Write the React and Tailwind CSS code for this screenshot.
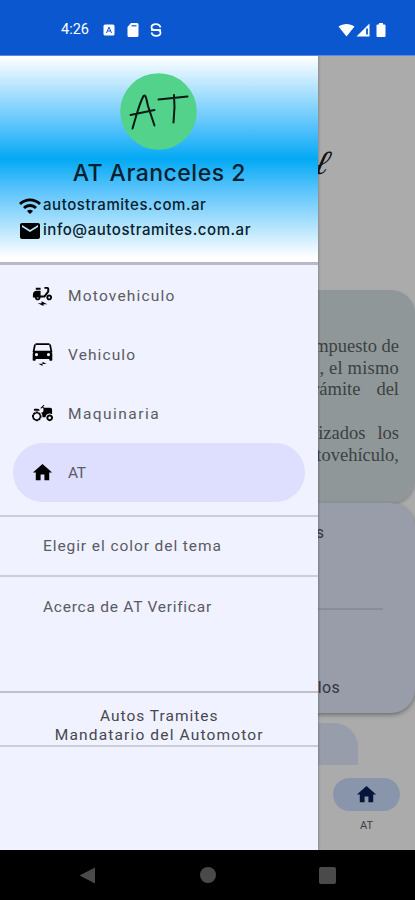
import clsx from "clsx";
import {
  MdAgriculture,
  MdElectricMoped,
  MdEmail,
  MdHome,
  MdWifi,
} from "react-icons/md";

// Front view of a car with the charging bolt underneath
const CarIcon = ({ size }) => (
  <svg width={size} height={size} viewBox="0 0 23 23">
    <path d="M4.500 1.200h14M4 1.500 2.600 8.500h17.800L19 1.500" fill="none" stroke="#000" strokeWidth="1.700" />
    <path
      fillRule="evenodd"
      d="M3 8h17l1.300 2.500V17a.8.8 0 0 1-.8.8h-1.400a.8.8 0 0 1-.8-.8v-1H4.700v1a.8.8 0 0 1-.8.8H2.500a.8.8 0 0 1-.8-.8v-6.500zM5.500 10a1.600 1.600 0 1 0 0 3.200 1.600 1.600 0 0 0 0-3.200zm12 0a1.600 1.600 0 1 0 0 3.200 1.600 1.600 0 0 0 0-3.200z"
    />
    <path d="M7.500 20.800h4v-2l4 2.200h-4v2z" />
  </svg>
);

const menuItems = [
  { label: "Motovehiculo", icon: MdElectricMoped, spacing: "tracking-[1.2px]" },
  { label: "Vehiculo", icon: CarIcon, spacing: "tracking-[1.1px]" },
  { label: "Maquinaria", icon: MdAgriculture, spacing: "tracking-[1.45px]" },
  { label: "AT", icon: MdHome, spacing: "tracking-[-0.5px]", active: true },
];

const StatusBar = () => (
  <header className="flex h-14 shrink-0 items-center border-b border-[#5c88df] bg-[#0b57d0] pt-[5px] pr-7 pl-[61px] text-white">
    <span className="w-[29px] font-[Roboto] text-[14.500px]">4:26</span>
    <svg className="ml-[13px]" width="12" height="12" viewBox="0 0 12 12">
      <rect x="0.5" y="0.5" width="11" height="11" rx="1.5" fill="#fff" />
      <path d="M3.5 9 6 3l2.5 6M4.5 7h3" stroke="#0b57d0" fill="none" />
    </svg>
    <svg className="ml-3" width="12" height="14" viewBox="0 0 12 14">
      <path d="M4 0h6a1.5 1.5 0 0 1 1.500 1.500v11A1.500 1.500 0 0 1 10 14H2A1.500 1.500 0 0 1 .5 12.500V4z" fill="#fff" />
      <path d="M4.500 2.800h5" stroke="#0b57d0" strokeWidth="1.200" />
    </svg>
    <svg className="ml-[11px]" width="12" height="14" viewBox="0 0 12 14" fill="none" stroke="#fff" strokeWidth="1.700">
      <path d="M10.500 4.500C10 2.500 8.500 1.200 6 1.200S1.500 2.500 1.500 4.500 3 7 6 7s4.500.8 4.500 2.700-2 3.100-4.500 3.100-4-1.300-4.500-3.300" />
      <path d="M1 7h10" />
    </svg>
    <div className="ml-auto flex items-center gap-[1px]">
      <svg width="17" height="14" viewBox="0 0 17 14" fill="#fff">
        <path d="M.5 3.500C5 0 12 0 16.500 3.500L8.500 13.500z" />
      </svg>
      <svg width="14" height="14" viewBox="0 0 14 14">
        <path d="M13.500.5v13H.5z" fill="#fff" />
        <path d="M11 5.500v6" stroke="#0b57d0" strokeWidth="1.800" />
      </svg>
      <svg className="ml-[5px] mr-px" width="10" height="14" viewBox="0 0 10 14" fill="#fff">
        <path d="M3 0h4v1.500h1.500a1 1 0 0 1 1 1V13a1 1 0 0 1-1 1h-7a1 1 0 0 1-1-1V2.500a1 1 0 0 1 1-1H3z" />
      </svg>
    </div>
  </header>
);

const DrawerHeader = () => (
  <div className="flex h-[209px] flex-col border-b-[3px] border-[#bcb8c8] bg-[linear-gradient(180deg,#ffffff_0%,#4fc0fb_36%,#03a9f4_50%,#4fc0fb_63%,#ffffff_98%)] pt-[17px]">
    <svg className="mx-auto shrink-0" width="77" height="77" viewBox="0 0 77 77">
      <circle cx="38.500" cy="38.500" r="38.300" fill="#52d28a" />
      <g fill="none" stroke="#0b1a12" strokeWidth="2" strokeLinecap="round" strokeLinejoin="round">
        <path d="M12.500 55.500C16 44 19 31 23.500 23c2.500-2 3 4 4.500 10l6.500 19.500M10.500 42 34.500 37" />
        <path d="M38.500 26.500 67.500 23.500M54 22l.5 12-1 15.500" />
      </g>
    </svg>
    <h1 className="mt-[7px] pl-px text-center font-[Inter] text-[23px] leading-8 font-medium tracking-[0.5px] text-[#06202e]">
      AT Aranceles 2
    </h1>
    <div className="mt-[4px] flex h-[25px] items-center pl-[18px] font-[Inter] text-[15px] text-[#08202c]">
      <MdWifi size={24} color="#000" className="mr-[1px]" />
      <span className="font-medium tracking-[0.55px]">autostramites.com.ar</span>
    </div>
    <div className="flex h-[25px] items-center pt-px pl-[18px] font-[Inter] text-[15px] text-[#08202c]">
      <MdEmail size={24} color="#000" className="mr-[1px] shrink-0" />
      <span className="-mt-px font-medium tracking-[0.55px]">info@autostramites.com.ar</span>
    </div>
  </div>
);

const Drawer = () => (
  <aside className="absolute inset-y-0 left-0 flex w-[317.500px] flex-col bg-[#f0f2ff] font-[Roboto] text-[15.500px] text-[#5a5b64] shadow-[1px_0_2px_rgba(0,0,0,0.2)]">
    <DrawerHeader />
    <nav className="flex h-[252px] flex-col border-b-2 border-[#cccdda] pt-[1.400px] pr-[13px] pl-[13px]">
      {menuItems.map(({ label, icon: Icon, spacing, active }) => (
        <a
          key={label}
          className={clsx(
            "flex h-[59px] items-center gap-[14px] rounded-full pl-[18px]",
            active && "bg-[#dedfff]",
          )}
        >
          <Icon size={23} color="#000" />
          <span className={clsx("pt-px", spacing)}>{label}</span>
        </a>
      ))}
    </nav>
    <div className="flex h-[60px] items-center border-b-2 border-[#cccdda] pt-[2px] pl-[43px] tracking-[0.92px]">
      Elegir el color del tema
    </div>
    <div className="h-[116px] border-b-2 border-[#bfc0cc] pt-[19px] pl-[43px] tracking-[0.75px]">
      Acerca de AT Verificar
    </div>
    <div className="flex h-[54px] flex-col items-center border-b-2 border-[#cccdda] pt-[14px] pl-px leading-[19px] text-[#46474f]">
      <p className="tracking-[1px]">Autos Tramites</p>
      <p className="tracking-[1.15px]">Mandatario del Automotor</p>
    </div>
  </aside>
);

// Home screen, already dimmed by the open drawer
const HomePage = () => (
  <main className="flex h-full flex-col bg-[#ababac]">
    <div className="flex h-[234px] items-center justify-end pr-[84px]">
      <span className="-mt-[22px] -skew-x-[24deg] font-['DejaVu_Serif'] text-[34px] text-[#111]">ℓ</span>
    </div>
    <section className="flex h-[213px] flex-col items-end rounded-[24px] bg-[#8f9798] pt-[46px] pr-4 font-['Liberation_Serif'] text-[18.500px] leading-[21.700px] text-[#3c4142] shadow-[0_2px_3px_rgba(0,0,0,0.2)]">
      <p>impuesto de</p>
      <p className="tracking-[0.2px]">, el mismo</p>
      <p className="flex gap-4"><span>trámite</span><span>del</span></p>
      <p className="mt-[21.700px] flex gap-3"><span>realizados</span><span>los</span></p>
      <p>motovehículo,</p>
    </section>
    <section className="flex h-[210px] flex-col rounded-[24px] bg-[#999da9] pt-[18px] font-[Roboto] text-[16px] text-[#34363d] shadow-[0_2px_4px_rgba(0,0,0,0.35)]">
      <p className="pr-[91px] text-right">Aranceles</p>
      <hr className="mt-[63px] mr-8 ml-8 border-t-2 border-[#8a8d98]" />
      <p className="mt-[66px] pr-[75px] text-right tracking-[0.3px]">Motovehiculos</p>
    </section>
    <div className="mt-[10px] mr-[57px] h-[42px] rounded-tr-[24px] bg-[#989dab]" />
    <nav className="flex flex-1 flex-col items-end pt-[13px] pr-[15px]">
      <div className="flex h-[33px] w-[67px] items-center justify-center rounded-full bg-[#8995ab]">
        <MdHome size={23} color="#07153d" />
      </div>
      <span className="mt-[7px] w-[67px] text-center font-[Roboto] text-[11px] text-[#3c3d42]">AT</span>
    </nav>
  </main>
);

const SystemNav = () => (
  <footer className="flex h-[50px] shrink-0 items-center justify-between bg-black pr-[79px] pl-[79px]">
    <svg width="17" height="17" viewBox="0 0 17 17" fill="#4a4a4a">
      <path d="M16 .5v16L.5 8.500z" />
    </svg>
    <div className="ml-[1px] size-4 rounded-full bg-[#4a4a4a]" />
    <div className="size-[17px] rounded-[2px] bg-[#4a4a4a]" />
  </footer>
);

export default function App() {
  return (
    <div className="flex h-[900px] w-[415px] flex-col overflow-hidden">
      <StatusBar />
      <div className="relative h-[794px] overflow-hidden">
        <HomePage />
        <Drawer />
      </div>
      <SystemNav />
    </div>
  );
}
